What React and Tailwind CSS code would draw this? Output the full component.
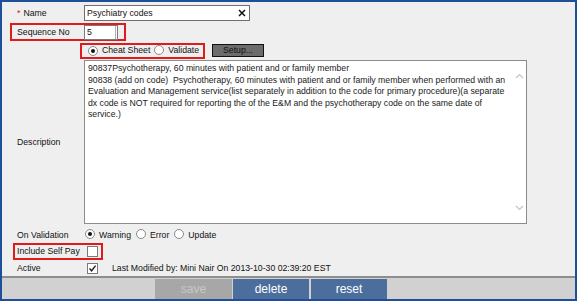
import React from "react";

function Radio({ checked }) {
  return (
    <span className="relative inline-block w-[10px] h-[10px] rounded-full border border-[#8a8a8a] bg-white shrink-0">
      {checked && <span className="absolute left-[2px] top-[2px] w-[4px] h-[4px] rounded-full bg-[#111]" />}
    </span>
  );
}

function Check({ checked }) {
  return (
    <span className="relative inline-block w-[11px] h-[11px] border border-[#7a7a7a] bg-white shrink-0">
      {checked && (
        <svg className="absolute left-0 top-0" width="9" height="9" viewBox="0 0 9 9">
          <path d="M1.5 4.5 L3.6 6.8 L7.6 1.6" stroke="#222" strokeWidth="1.4" fill="none" />
        </svg>
      )}
    </span>
  );
}

export default function App() {
  const lines = [
    "90837Psychotherapy, 60 minutes with patient and or family member",
    "90838 (add on code)  Psychotherapy, 60 minutes with patient and or family member when performed with an",
    "Evaluation and Management service(list separately in addition to the code for primary procedure)(a separate",
    "dx code is NOT required for reporting the of the E&M and the psychotherapy code on the same date of",
    "service.)",
  ];
  return (
    <div className="w-[577px] h-[301px] border-2 border-[#1f4f98] bg-[#efefef] flex flex-col font-['Liberation_Sans',Arial,sans-serif] text-[8.7px] text-[#111] leading-none">
      <div className="flex-1 flex flex-col">
        {/* Name */}
        <div className="flex items-center h-[16px] mt-[3px]">
          <div className="w-[82px] pl-[15px] flex items-center">
            <span className="text-[#d42020] mr-[3px]">*</span>
            <span>Name</span>
          </div>
          <div className="relative w-[166px] h-[16px] border border-[#6e6e6e] bg-white flex items-center pl-[2px]">
            <span>Psychiatry codes</span>
            <svg className="absolute right-[3px] top-[3px]" width="8" height="8" viewBox="0 0 8 8">
              <path d="M1 1 L7 7 M7 1 L1 7" stroke="#111" strokeWidth="1.5" />
            </svg>
          </div>
        </div>
        {/* Sequence No */}
        <div className="flex mt-[2px]">
          <div className="ml-[8px] w-[116px] h-[18px] border-2 border-[#e01b1b] flex items-center">
            <span className="pl-[5px] w-[72px]">Sequence No</span>
            <div className="w-[34px] h-[15px] border border-[#7a7a7a] bg-white flex items-center pl-[2px] relative">
              5
              <span className="absolute right-[1px] top-0 bottom-0 w-[1px] bg-[#b0b0b0]" />
            </div>
          </div>
        </div>
        {/* Cheat sheet */}
        <div className="flex items-center mt-[1px] h-[17px]">
          <div className="ml-[78px] w-[125px] h-[16px] border-2 border-[#e01b1b] flex items-center pl-[6px]">
            <Radio checked />
            <span className="ml-[4px]">Cheat Sheet</span>
            <span className="ml-[4px]"><Radio /></span>
            <span className="ml-[4px]">Validate</span>
          </div>
          <div className="ml-[7px] w-[52px] h-[13px] border border-[#111] bg-[#6c6c6c] flex items-center justify-center text-[#111]">
            Setup...
          </div>
        </div>
        {/* Description */}
        <div className="flex mt-[1px]">
          <div className="w-[82px] pl-[15px] flex items-center">Description</div>
          <div className="w-[443px] h-[164px] border border-[#8c8c8c] bg-white flex">
            <div className="flex-1 pl-[3px] pt-[2px] text-[8.7px] leading-[11.5px] text-[#1a1a1a] overflow-hidden">
              {lines.map((l, i) => (
                <div key={i} className="whitespace-pre">{l}</div>
              ))}
            </div>
            <div className="w-[13px] flex flex-col items-center justify-between py-[12px]">
              <svg width="9" height="6" viewBox="0 0 9 6">
                <path d="M1 5 L4.5 1.5 L8 5" stroke="#c4c4c4" strokeWidth="1.2" fill="none" />
              </svg>
              <svg width="9" height="6" viewBox="0 0 9 6">
                <path d="M1 1 L4.5 4.5 L8 1" stroke="#c4c4c4" strokeWidth="1.2" fill="none" />
              </svg>
            </div>
          </div>
        </div>
        {/* On Validation */}
        <div className="flex items-center h-[12px] mt-[5px]">
          <div className="w-[82px] pl-[15px]">On Validation</div>
          <span className="ml-[1px]"><Radio checked /></span>
          <span className="ml-[4px]">Warning</span>
          <span className="ml-[5px]"><Radio /></span>
          <span className="ml-[4px]">Error</span>
          <span className="ml-[5px]"><Radio /></span>
          <span className="ml-[4px]">Update</span>
        </div>
        {/* Include Self Pay */}
        <div className="flex mt-[2px]">
          <div className="ml-[11px] w-[90px] h-[17px] border-2 border-[#e01b1b] flex items-center">
            <span className="pl-[2px] w-[72px]">Include Self Pay</span>
            <Check />
          </div>
        </div>
        {/* Active */}
        <div className="flex items-center h-[12px] mt-[2px]">
          <div className="w-[85px] pl-[15px]">Active</div>
          <Check checked />
          <span className="ml-[14px]">Last Modified by: Mini Nair On 2013-10-30 02:39:20 EST</span>
        </div>
      </div>
      {/* Footer */}
      <div className="h-[23px] border-t-2 border-[#8e8e8e] bg-[#d1d1d1] flex items-end pl-[153px] gap-[1px] text-[12px]">
        <div className="w-[77px] h-[20px] bg-[#a7a7a7] text-[#c8c8c8] flex items-center justify-center">save</div>
        <div className="w-[76px] h-[20px] bg-[#4b6e9c] text-white flex items-center justify-center">delete</div>
        <div className="w-[76px] h-[20px] ml-[1px] bg-[#4b6e9c] text-white flex items-center justify-center">reset</div>
      </div>
    </div>
  );
}
